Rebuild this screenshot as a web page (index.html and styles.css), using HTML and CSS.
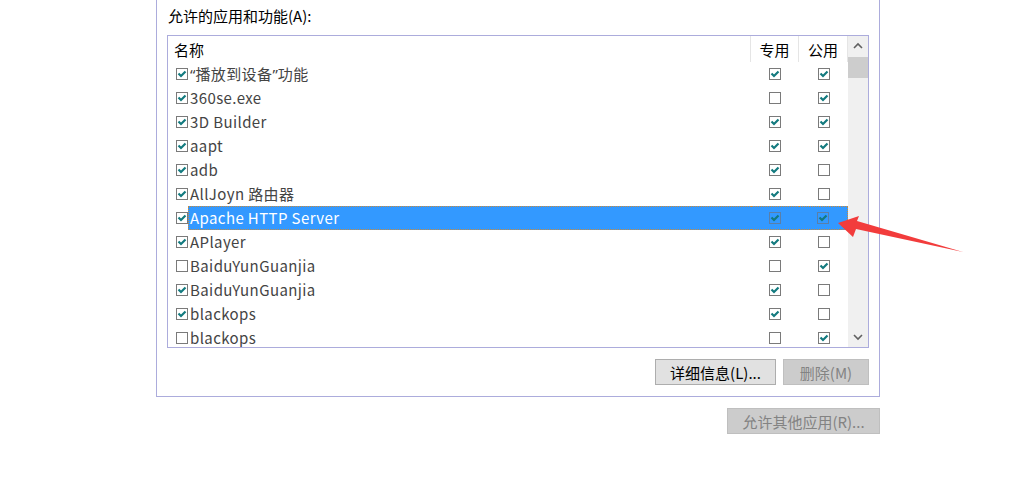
FILE: index.html
```html
<!DOCTYPE html>
<html lang="zh-CN">
<head>
    <meta charset="UTF-8">
    <title>允许的应用和功能</title>
    <link rel="stylesheet" href="styles.css">
</head>
<body>
    <div class="page">
        <div class="group">
            <div class="group-title">允许的应用和功能(A):</div>
            <div class="list-box">
                <div class="list-main">
                    <div class="row head">
                        <div class="cell name-head">名称</div>
                        <div class="cell col-head">专用</div>
                        <div class="cell col-head">公用</div>
                    </div>

                    <div class="row">
                        <div class="cell box-cell"><span class="cb on"></span></div>
                        <div class="cell name"><span class="q">“</span>播放到设备<span class="q">”</span>功能</div>
                        <div class="cell chk"><span class="cb on"></span></div>
                        <div class="cell chk"><span class="cb on"></span></div>
                    </div>
                    <div class="row">
                        <div class="cell box-cell"><span class="cb on"></span></div>
                        <div class="cell name">360se.exe</div>
                        <div class="cell chk"><span class="cb"></span></div>
                        <div class="cell chk"><span class="cb on"></span></div>
                    </div>
                    <div class="row">
                        <div class="cell box-cell"><span class="cb on"></span></div>
                        <div class="cell name">3D Builder</div>
                        <div class="cell chk"><span class="cb on"></span></div>
                        <div class="cell chk"><span class="cb on"></span></div>
                    </div>
                    <div class="row">
                        <div class="cell box-cell"><span class="cb on"></span></div>
                        <div class="cell name">aapt</div>
                        <div class="cell chk"><span class="cb on"></span></div>
                        <div class="cell chk"><span class="cb on"></span></div>
                    </div>
                    <div class="row">
                        <div class="cell box-cell"><span class="cb on"></span></div>
                        <div class="cell name">adb</div>
                        <div class="cell chk"><span class="cb on"></span></div>
                        <div class="cell chk"><span class="cb"></span></div>
                    </div>
                    <div class="row">
                        <div class="cell box-cell"><span class="cb on"></span></div>
                        <div class="cell name">AllJoyn 路由器</div>
                        <div class="cell chk"><span class="cb on"></span></div>
                        <div class="cell chk"><span class="cb"></span></div>
                    </div>
                    <div class="row selected">
                        <div class="cell box-cell"><span class="cb on"></span></div>
                        <div class="cell name">Apache HTTP Server</div>
                        <div class="cell chk"><span class="cb on"></span></div>
                        <div class="cell chk last"><span class="cb on"></span></div>
                    </div>
                    <div class="row">
                        <div class="cell box-cell"><span class="cb on"></span></div>
                        <div class="cell name">APlayer</div>
                        <div class="cell chk"><span class="cb on"></span></div>
                        <div class="cell chk"><span class="cb"></span></div>
                    </div>
                    <div class="row">
                        <div class="cell box-cell"><span class="cb"></span></div>
                        <div class="cell name">BaiduYunGuanjia</div>
                        <div class="cell chk"><span class="cb"></span></div>
                        <div class="cell chk"><span class="cb on"></span></div>
                    </div>
                    <div class="row">
                        <div class="cell box-cell"><span class="cb on"></span></div>
                        <div class="cell name">BaiduYunGuanjia</div>
                        <div class="cell chk"><span class="cb on"></span></div>
                        <div class="cell chk"><span class="cb"></span></div>
                    </div>
                    <div class="row">
                        <div class="cell box-cell"><span class="cb on"></span></div>
                        <div class="cell name">blackops</div>
                        <div class="cell chk"><span class="cb on"></span></div>
                        <div class="cell chk"><span class="cb"></span></div>
                    </div>
                    <div class="row">
                        <div class="cell box-cell"><span class="cb"></span></div>
                        <div class="cell name">blackops</div>
                        <div class="cell chk"><span class="cb"></span></div>
                        <div class="cell chk"><span class="cb on"></span></div>
                    </div>
                </div>

                <!-- 滚动条 -->
                <div class="scrollbar">
                    <div class="sb-btn">
                        <svg width="10" height="8" viewBox="0 0 10 8"><polyline points="1,6 5,2 9,6" fill="none" stroke="#606060" stroke-width="1.6"/></svg>
                    </div>
                    <div class="sb-thumb"></div>
                    <div class="sb-track"></div>
                    <div class="sb-btn">
                        <svg width="10" height="8" viewBox="0 0 10 8"><polyline points="1,2 5,6 9,2" fill="none" stroke="#606060" stroke-width="1.6"/></svg>
                    </div>
                </div>
            </div>

            <div class="btn-row">
                <button class="btn btn-detail">详细信息(L)...</button>
                <button class="btn btn-del" disabled>删除(M)</button>
            </div>
        </div>

        <div class="btn-row outer">
            <button class="btn btn-other" disabled>允许其他应用(R)...</button>
        </div>

        <!-- 红色箭头标注 -->
        <svg class="arrow" width="1012" height="479" viewBox="0 0 1012 479">
            <polygon points="838,223 859,216 857,221 963,252 856,229 853,237" fill="#f23c3c"/>
        </svg>
    </div>
</body>
</html>
```

FILE: styles.css
```css
/* 기본 */
body {
    margin: 0;
    background: #fff;
    font-family: "Noto Sans CJK SC", "Noto Sans", sans-serif;
    font-size: 15px;
    color: #000;
}

.page {
    width: 724px;
    margin-left: 156px;
}

.group {
    border: 1px solid #acacdc;
    border-top: none;
    height: 396px;
    padding: 0 10px;
    box-sizing: content-box;
}

.group-title {
    height: 35px;
    line-height: 26px;
    padding-top: 3px;
    padding-left: 1px;
    box-sizing: border-box;
}

.list-box {
    border: 1px solid #acacdc;
    height: 313px;
    box-sizing: border-box;
    display: flex;
    overflow: hidden;
}

.list-main {
    width: 680px;
    overflow: hidden;
}

.row {
    display: grid;
    grid-template-columns: 20px 563px 48px 49px;
    height: 24px;
}

.row.head {
    grid-template-columns: 583px 48px 49px;
    height: 26px;
}

.cell {
    display: flex;
    align-items: center;
    box-sizing: border-box;
    white-space: nowrap;
}

.name-head {
    padding-left: 6px;
    border-right: 1px solid #e5e5e5;
}

.col-head {
    justify-content: center;
    border-right: 1px solid #e5e5e5;
}

.box-cell {
    padding-left: 8px;
}

.name {
    padding-left: 2px;
    padding-bottom: 1px;
    color: #444;
    letter-spacing: 0.4px;
}

.name .q {
    font-family: "Noto Sans", sans-serif;
    letter-spacing: 0;
}

.chk {
    justify-content: center;
}

/* 선택된 행 */
.row.selected .name,
.row.selected .chk {
    background: #3399ff;
    color: #fff;
    border-top: 1px dotted #c98a3a;
    border-bottom: 1px dotted #c98a3a;
}

.row.selected .name {
    border-left: 1px dotted #c98a3a;
    padding-left: 1px;
}

.row.selected .last {
    border-right: 1px dotted #c98a3a;
}

/* 체크박스 */
.cb {
    width: 12px;
    height: 12px;
    border: 1px solid #7a7a7a;
    box-sizing: border-box;
    display: inline-block;
    background-color: #fff;
}

.row.selected .chk .cb {
    background-color: transparent;
    border-color: #5a7fa8;
}

.cb.on {
    background-image: url("data:image/svg+xml,%3Csvg xmlns='http://www.w3.org/2000/svg' width='10' height='10' viewBox='0 0 10 10'%3E%3Cpolyline points='1.5,4.5 4,7 8.5,2.5' fill='none' stroke='%23137a7f' stroke-width='2.2'/%3E%3C/svg%3E");
    background-repeat: no-repeat;
    background-position: center;
}

/* 스크롤바 */
.scrollbar {
    width: 20px;
    background: #f0f0f0;
    display: flex;
    flex-direction: column;
}

.sb-btn {
    height: 20px;
    display: flex;
    align-items: center;
    justify-content: center;
    flex-shrink: 0;
}

.sb-thumb {
    height: 21px;
    margin-top: 1px;
    background: #cdcdcd;
    flex-shrink: 0;
}

.sb-track {
    flex: 1;
}

/* 버튼 */
.btn-row {
    display: flex;
    justify-content: flex-end;
    gap: 7px;
    margin-top: 11px;
}

.btn {
    height: 26px;
    font-family: inherit;
    font-size: 15px;
    padding: 0;
    border: 1px solid #adadad;
    background: #e1e1e1;
    color: #000;
}

.btn:disabled {
    background: #cccccc;
    border-color: #bfbfbf;
    color: #838383;
}

.btn-detail {
    width: 121px;
}

.btn-del {
    width: 86px;
}

.btn-other {
    width: 153px;
}

.arrow {
    position: absolute;
    left: 0;
    top: 0;
    pointer-events: none;
}
```
